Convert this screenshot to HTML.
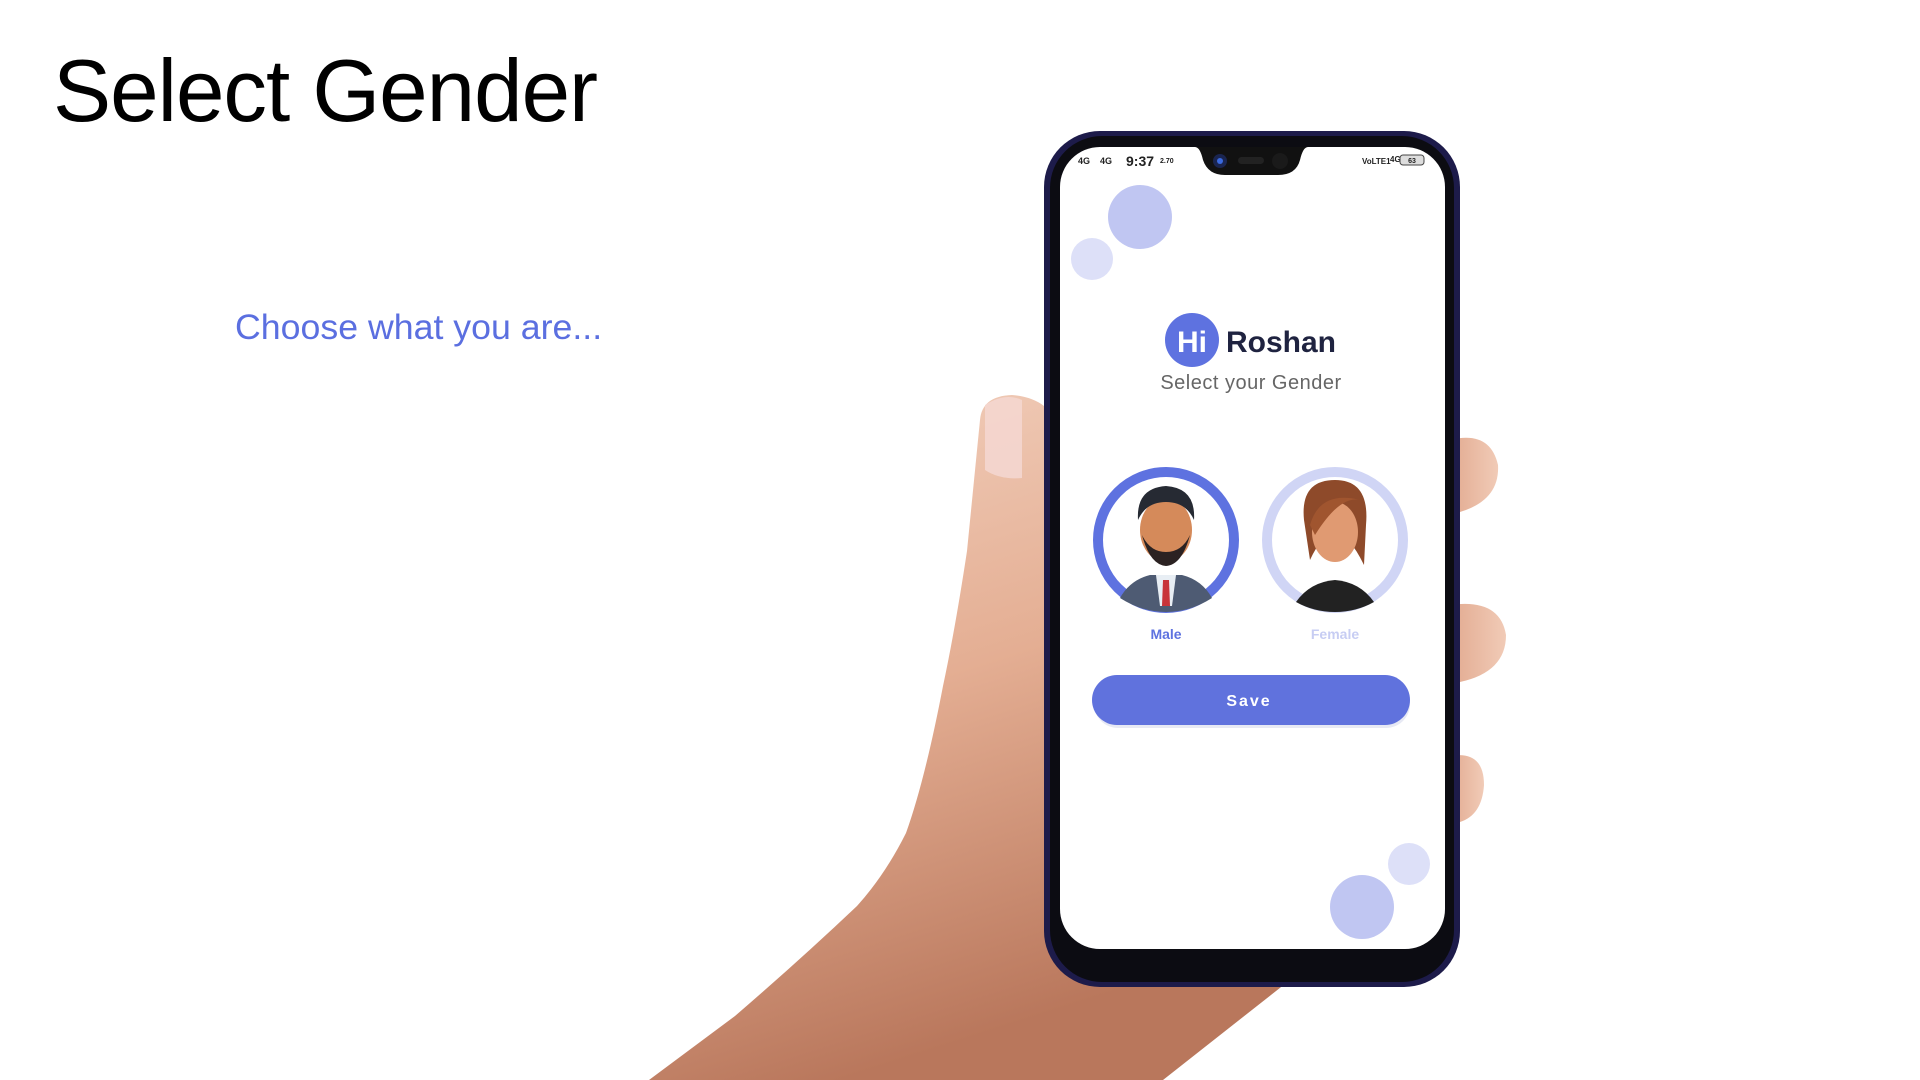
<!DOCTYPE html>
<html><head><meta charset="utf-8"><style>
*{margin:0;padding:0;box-sizing:border-box}
body{width:1920px;height:1080px;background:#fff;position:relative;overflow:hidden;font-family:"Liberation Sans",sans-serif}
.abs{position:absolute}
h1{position:absolute;left:53px;top:40px;font-weight:400;font-size:88px;color:#000;letter-spacing:-1px;transform:scaleX(0.99);transform-origin:left}
.sub{left:235px;top:308px;font-size:35px;color:#5b6fe0;transform:scaleX(1.02);transform-origin:left}
</style></head><body>
<h1>Select Gender</h1>
<div class="abs sub">Choose what you are...</div>

<svg class="abs" style="left:0;top:0" width="1920" height="1080">
<defs>
<linearGradient id="sk" x1="0" y1="0" x2="0.3" y2="1">
<stop offset="0" stop-color="#f3d2c0"/><stop offset="0.5" stop-color="#e4ae93"/><stop offset="1" stop-color="#b9775c"/></linearGradient>
<linearGradient id="fg" x1="0" y1="0" x2="1" y2="0">
<stop offset="0" stop-color="#e2aa90"/><stop offset="1" stop-color="#f1cbb7"/></linearGradient>
</defs>
<path d="M1450 440 Q1490 430 1498 465 Q1500 500 1460 512 Z" fill="url(#fg)"/>
<path d="M1450 605 Q1500 598 1506 635 Q1506 672 1460 682 Z" fill="url(#fg)"/>
<path d="M1450 756 Q1484 750 1484 785 Q1482 815 1460 822 Z" fill="url(#fg)"/>
<path d="M1060 430 Q1050 398 1012 395 Q982 396 980 420 L967 551 Q955 630 943 686 Q925 780 906 833 Q885 875 857 906 Q800 960 735 1016 L649 1080 L1163 1080 L1290 980 L1100 980 L1070 950 Z" fill="url(#sk)"/>
<path d="M985 405 Q1005 392 1022 400 L1022 478 Q1000 480 985 470 Z" fill="#f4d6cf" opacity="0.9"/>
<rect x="1044" y="131" width="416" height="856" rx="56" fill="#1d1b4a"/>
<rect x="1050" y="136" width="404" height="846" rx="52" fill="#0c0c12"/>
<rect x="1060" y="147" width="385" height="802" rx="40" fill="#fff"/>
<path d="M1195 147 Q1200 147 1203 160 Q1208 175 1225 175 L1278 175 Q1296 175 1300 160 Q1303 147 1308 147 Z" fill="#111"/>
<circle cx="1220" cy="161" r="7" fill="#1a2550"/><circle cx="1220" cy="161" r="3" fill="#3a6ae0"/>
<rect x="1238" y="157" width="26" height="7" rx="3.5" fill="#222"/>
<circle cx="1280" cy="161" r="8" fill="#1a1a1a"/>
<circle cx="1140" cy="217" r="32" fill="#c0c6f2"/>
<circle cx="1092" cy="259" r="21" fill="#dde0f8"/>
<circle cx="1409" cy="864" r="21" fill="#dde0f8"/>
<circle cx="1362" cy="907" r="32" fill="#c0c6f2"/>
<circle cx="1192" cy="340" r="27" fill="#5e72e0"/>
<text x="1192" y="352" text-anchor="middle" font-size="30" font-weight="700" fill="#fff" font-family="Liberation Sans">Hi</text>
<text x="1226" y="352" font-size="30" font-weight="700" fill="#1f2340" font-family="Liberation Sans">Roshan</text>
<text x="1251" y="389" text-anchor="middle" font-size="20" fill="#666" font-family="Liberation Sans" letter-spacing="0.5">Select your Gender</text>
<circle cx="1166" cy="540" r="68" fill="#fff" stroke="#5e72e0" stroke-width="10"/>
<circle cx="1335" cy="540" r="68" fill="#fff" stroke="#d0d5f5" stroke-width="10"/>
<path d="M1120 598 Q1130 580 1150 575 L1182 575 Q1202 580 1212 598 Q1190 612 1166 612 Q1142 612 1120 598Z" fill="#4e5b73"/>
<path d="M1156 575 L1176 575 L1172 606 L1160 606Z" fill="#e8eef4"/><path d="M1163 580 L1169 580 L1170 606 L1162 606Z" fill="#c8343a"/>
<ellipse cx="1166" cy="530" rx="26" ry="32" fill="#d58a5a"/>
<path d="M1142 535 Q1150 565 1166 566 Q1182 565 1190 535 Q1182 552 1166 552 Q1150 552 1142 535Z" fill="#2b2222"/>
<path d="M1138 520 Q1136 488 1166 486 Q1196 488 1194 520 Q1186 502 1166 502 Q1146 502 1138 520Z" fill="#262a33"/>
<path d="M1296 602 Q1310 582 1335 580 Q1360 582 1374 602 Q1356 612 1335 612 Q1314 612 1296 602Z" fill="#222"/>
<path d="M1304 520 Q1300 480 1335 480 Q1370 480 1366 525 L1364 565 Q1335 505 1310 560 Z" fill="#8e4a2a"/>
<ellipse cx="1335" cy="532" rx="23" ry="30" fill="#e09a72"/>
<path d="M1310 525 Q1320 490 1360 500 Q1340 495 1315 535Z" fill="#a0552f"/>
<text x="1166" y="639" text-anchor="middle" font-size="14" font-weight="700" fill="#5e72e0" font-family="Liberation Sans">Male</text>
<text x="1335" y="639" text-anchor="middle" font-size="14" font-weight="700" fill="#c7cdf3" font-family="Liberation Sans">Female</text>
<rect x="1094" y="680" width="316" height="48" rx="24" fill="#cfd3ea" opacity="0.5"/>
<rect x="1092" y="675" width="318" height="50" rx="25" fill="#6072dd"/>
<text x="1249" y="706" text-anchor="middle" font-size="16" font-weight="700" fill="#fff" font-family="Liberation Sans" letter-spacing="2">Save</text>
<text x="1078" y="164" font-size="9" font-weight="700" fill="#222">4G</text>
<text x="1100" y="164" font-size="9" font-weight="700" fill="#222">4G</text>
<text x="1126" y="166" font-size="14" font-weight="700" fill="#222">9:37</text>
<text x="1160" y="163" font-size="7" font-weight="700" fill="#222">2.70</text>
<text x="1362" y="164" font-size="8" font-weight="700" fill="#222">VoLTE1</text>
<text x="1390" y="162" font-size="8" font-weight="700" fill="#222">4G</text>
<rect x="1400" y="155" width="24" height="10" rx="3" fill="#ddd" stroke="#444" stroke-width="1"/>
<text x="1412" y="163" text-anchor="middle" font-size="7" font-weight="700" fill="#222">63</text>
</svg>
</body></html>
